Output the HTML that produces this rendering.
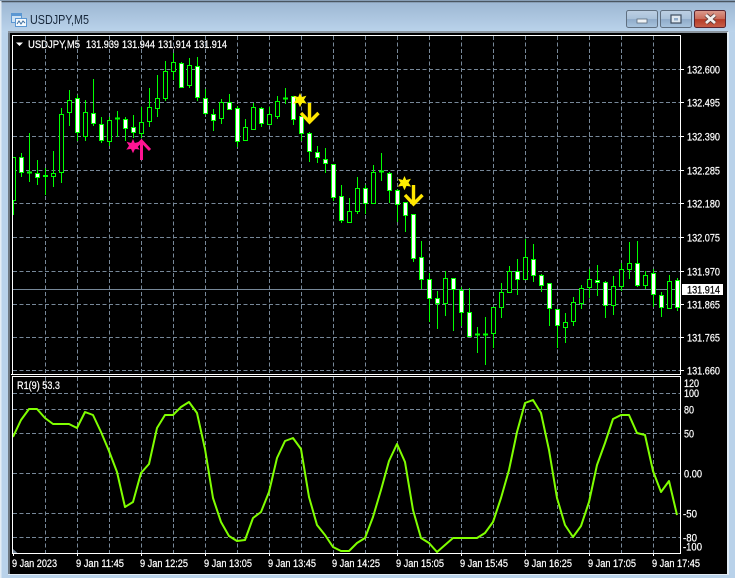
<!DOCTYPE html>
<html><head><meta charset="utf-8"><title>USDJPY,M5</title>
<style>
html,body{margin:0;padding:0;background:#b9d2ea;width:735px;height:578px;overflow:hidden}
svg{display:block}
text{font-family:"Liberation Sans",sans-serif;font-size:11px;fill:#fff;stroke:#fff;stroke-width:.22px}
</style></head><body>
<svg width="735" height="578" viewBox="0 0 735 578" xmlns="http://www.w3.org/2000/svg">
<defs>
<linearGradient id="tb" x1="0" y1="0" x2="0" y2="1"><stop offset="0" stop-color="#9bb5d1"/><stop offset="1" stop-color="#bad3eb"/></linearGradient>
<linearGradient id="btn" x1="0" y1="0" x2="0" y2="1"><stop offset="0" stop-color="#bdd0e3"/><stop offset=".5" stop-color="#a9c1da"/><stop offset=".52" stop-color="#8fabc9"/><stop offset="1" stop-color="#a9c4de"/></linearGradient>
<linearGradient id="cls" x1="0" y1="0" x2="0" y2="1"><stop offset="0" stop-color="#dc9c8e"/><stop offset=".5" stop-color="#c96a58"/><stop offset=".52" stop-color="#b53b27"/><stop offset="1" stop-color="#c8604a"/></linearGradient>
<clipPath id="mc"><rect x="13" y="36" width="667" height="338"/></clipPath>
<clipPath id="ic"><rect x="13" y="377" width="667" height="176"/></clipPath>
</defs>
<rect width="735" height="578" fill="#b9d2ea"/>
<rect x="0" y="0" width="735" height="32" fill="url(#tb)"/>
<rect x="0" y="32" width="9" height="546" fill="#b9d2ea"/>
<path d="M0 1.500H735" stroke="#4a5560" stroke-width="1.500"/>
<path d="M0.500 1V578" stroke="#e4edf5" stroke-width="2"/>
<rect x="8" y="31" width="720" height="2" fill="#8a949e"/>
<rect x="8" y="33" width="720" height="541" fill="#000"/>
<rect x="8" y="33" width="2" height="541" fill="#6d7882"/>
<rect x="727" y="32" width="2" height="543" fill="#e3edf6"/>
<rect x="8" y="574" width="721" height="1" fill="#e3edf6"/>

<!-- title icon -->
<rect x="11.500" y="13.500" width="10" height="9" fill="#cfe3f5" stroke="#5b97d2"/>
<rect x="11.500" y="13.500" width="10" height="2.500" fill="#5b97d2"/>
<rect x="15.500" y="18.500" width="11" height="8" fill="#f4f9fd" stroke="#5b97d2"/>
<path d="M17 24l2-3 2 3 2-3 2 2" fill="none" stroke="#3f6f9f"/>
<text x="30" y="24" textLength="59" lengthAdjust="spacingAndGlyphs" style="font-size:12.500px;fill:#16263a;stroke:none">USDJPY,M5</text>

<!-- window buttons -->
<rect x="626.500" y="10.500" width="31" height="17" rx="2" fill="url(#btn)" stroke="#5f6f80"/>
<rect x="637" y="19" width="10" height="4" fill="#eef2f5" stroke="#5a6a7c" stroke-width=".8"/>
<rect x="660.500" y="10.500" width="31" height="17" rx="2" fill="url(#btn)" stroke="#5f6f80"/>
<rect x="671" y="15" width="10" height="8" fill="#dfe8f0" stroke="#3e4e60" stroke-width="1.200"/>
<rect x="674" y="18" width="4" height="2.500" fill="#8fabc9"/>
<rect x="694.500" y="10.500" width="31" height="17" rx="2" fill="url(#cls)" stroke="#5a2530"/>
<path d="M706 15l9 8M715 15l-9 8" stroke="#5a3a38" stroke-width="4.400"/>
<path d="M706 15l9 8M715 15l-9 8" stroke="#f3f0ee" stroke-width="2.800"/>

<!-- grids -->
<g shape-rendering="crispEdges">
<path d="M45.500 36V374M77.500 36V374M109.500 36V374M141.500 36V374M173.500 36V374M205.500 36V374M237.500 36V374M269.500 36V374M301.500 36V374M333.500 36V374M365.500 36V374M397.500 36V374M429.500 36V374M461.500 36V374M493.500 36V374M525.500 36V374M557.500 36V374M589.500 36V374M621.500 36V374M653.500 36V374M13 69.500H680M13 102.500H680M13 136.500H680M13 170.500H680M13 203.500H680M13 237.500H680M13 271.500H680M13 304.500H680M13 337.500H680M13 370.500H680" stroke="#778899" stroke-dasharray="4 2.400" fill="none"/>
<path d="M13 289.500H680" stroke="#778899"/>
<path d="M45.500 377V553M77.500 377V553M109.500 377V553M141.500 377V553M173.500 377V553M205.500 377V553M237.500 377V553M269.500 377V553M301.500 377V553M333.500 377V553M365.500 377V553M397.500 377V553M429.500 377V553M461.500 377V553M493.500 377V553M525.500 377V553M557.500 377V553M589.500 377V553M621.500 377V553M653.500 377V553M13 393.500H680M13 409.500H680M13 433.500H680M13 473.500H680M13 513.500H680M13 537.500H680" stroke="#778899" stroke-dasharray="4 2.400" fill="none"/>
</g>

<g clip-path="url(#mc)">
<g shape-rendering="crispEdges">
<!-- wicks -->
<path fill="none" stroke="#00ff00" d="M13.500 157V215M21.500 153V177M29.500 133V182M37.500 160V185M45.500 168V195M53.500 151V187M61.500 108V183M69.500 90V126M77.500 95V141M85.500 100V141M93.500 79V126M101.500 117V143M109.500 117V146M117.500 111V137M125.500 117V141M133.500 115V138M141.500 107V138M149.500 88V127M157.500 75V117M165.500 61V101M173.500 53V80M181.500 62V88M189.500 58V88M197.500 57V101M205.500 89V115M213.500 109V131M221.500 99V124M229.500 94V110M237.500 106V147M245.500 119V140M253.500 103V130M261.500 107V127M269.500 107V124M277.500 96V119M285.500 88V104M293.500 96V125M301.500 116V141M309.500 132V162M317.500 146V163M325.500 148V173M333.500 164V201M341.500 185V223M349.500 198V222M357.500 177V214M365.500 185V214M373.500 165V203M381.500 153V181M389.500 172V203M397.500 189V222M405.500 202V232M413.500 214V262M421.500 241V289M429.500 273V322M437.500 291V329M445.500 271V316M453.500 278V331M461.500 287V326M469.500 288V336M477.500 327V353M485.500 317V365M493.500 307V348M501.500 283V318M509.500 266V292M517.500 259V295M525.500 239V279M533.500 244V282M541.500 274V292M549.500 283V326M557.500 309V348M565.500 313V343M573.500 297V326M581.500 285V309M589.500 269V298M597.500 265V296M605.500 281V318M613.500 276V315M621.500 263V291M629.500 242V279M637.500 241V287M645.500 271V289M653.500 269V307M661.500 292V317M669.500 275V308M677.500 278V311"/>
<!-- doji -->
<path fill="none" stroke="#00ff00" stroke-width="2" d="M27 172.500h5M115 118.500h5M283 98.500h5M379 171.500h5M475 334.500h5M483 334.500h5"/>
<!-- hollow bodies -->
<path fill="#000" stroke="#00ff00" d="M11.500 157.500h4V200.500h-4zM43.500 175.500h4V176.500h-4zM51.500 173.500h4V176.500h-4zM59.500 114.500h4V172.500h-4zM67.500 100.500h4V112.500h-4zM83.500 112.500h4V136.500h-4zM107.500 120.500h4V141.500h-4zM139.500 122.500h4V133.500h-4zM147.500 107.500h4V121.500h-4zM155.500 98.500h4V108.500h-4zM163.500 71.500h4V98.500h-4zM171.500 62.500h4V71.500h-4zM187.500 65.500h4V85.500h-4zM219.500 102.500h4V118.500h-4zM243.500 127.500h4V140.500h-4zM251.500 107.500h4V129.500h-4zM267.500 114.500h4V124.500h-4zM275.500 101.500h4V116.500h-4zM347.500 211.500h4V222.500h-4zM355.500 188.500h4V211.500h-4zM371.500 172.500h4V203.500h-4zM443.500 278.500h4V303.500h-4zM491.500 307.500h4V333.500h-4zM499.500 292.500h4V307.500h-4zM507.500 271.500h4V292.500h-4zM523.500 257.500h4V279.500h-4zM563.500 322.500h4V327.500h-4zM571.500 302.500h4V321.500h-4zM579.500 288.500h4V303.500h-4zM587.500 279.500h4V287.500h-4zM611.500 286.500h4V305.500h-4zM619.500 269.500h4V286.500h-4zM627.500 263.500h4V269.500h-4zM643.500 275.500h4V285.500h-4zM667.500 281.500h4V308.500h-4z"/>
<!-- white bodies -->
<path fill="#fff" stroke="#00ff00" d="M19.500 157.500h4V172.500h-4zM35.500 173.500h4V177.500h-4zM75.500 98.500h4V132.500h-4zM91.500 113.500h4V123.500h-4zM99.500 124.500h4V140.500h-4zM123.500 119.500h4V128.500h-4zM131.500 127.500h4V132.500h-4zM179.500 63.500h4V87.500h-4zM195.500 66.500h4V97.500h-4zM203.500 98.500h4V113.500h-4zM211.500 114.500h4V120.500h-4zM227.500 102.500h4V109.500h-4zM235.500 108.500h4V141.500h-4zM259.500 108.500h4V123.500h-4zM291.500 96.500h4V119.500h-4zM299.500 116.500h4V133.500h-4zM307.500 133.500h4V151.500h-4zM315.500 152.500h4V157.500h-4zM323.500 159.500h4V163.500h-4zM331.500 164.500h4V197.500h-4zM339.500 196.500h4V220.500h-4zM363.500 188.500h4V203.500h-4zM387.500 173.500h4V190.500h-4zM395.500 190.500h4V204.500h-4zM403.500 202.500h4V215.500h-4zM411.500 214.500h4V258.500h-4zM419.500 257.500h4V279.500h-4zM427.500 279.500h4V298.500h-4zM435.500 298.500h4V303.500h-4zM451.500 278.500h4V289.500h-4zM459.500 290.500h4V312.500h-4zM467.500 312.500h4V336.500h-4zM515.500 271.500h4V279.500h-4zM531.500 259.500h4V275.500h-4zM539.500 275.500h4V285.500h-4zM547.500 283.500h4V308.500h-4zM555.500 309.500h4V325.500h-4zM595.500 280.500h4V282.500h-4zM603.500 282.500h4V305.500h-4zM635.500 263.500h4V285.500h-4zM651.500 273.500h4V294.500h-4zM659.500 295.500h4V307.500h-4zM675.500 280.500h4V307.500h-4z"/>
</g>
<!-- pink star + arrow -->
<path fill="#ff1493" d="M133 139l1.800 4 4.600-1.200-2.400 4 2.700 3.800-4.700-.7-2 4.400-2-4.400-4.700.7 2.700-3.800-2.400-4 4.600 1.200z"/>
<path fill="none" stroke="#ff1493" stroke-width="3" d="M141.500 160V142M134 148.500l7.500-7.500 8.500 9"/>
<!-- yellow stars + arrows -->
<path fill="#ffee00" d="M300 93l1.800 4 4.600-1.200-2.400 4 2.700 3.800-4.700-.7-2 4.400-2-4.400-4.700.7 2.700-3.800-2.400-4 4.600 1.200z"/>
<path fill="none" stroke="#ffe600" stroke-width="3.400" d="M309.500 103V121M301 113l8.500 9 9-9"/>
<path fill="#ffee00" d="M404.500 176l1.800 4 4.600-1.200-2.400 4 2.700 3.800-4.700-.7-2 4.400-2-4.400-4.700.7 2.700-3.800-2.400-4 4.600 1.200z"/>
<path fill="none" stroke="#ffe600" stroke-width="3.400" d="M413.500 185V203M405 195l8.500 9 9-9"/>
</g>

<!-- indicator line -->
<g clip-path="url(#ic)">
<polyline fill="none" stroke="#80ff00" stroke-width="2" stroke-linejoin="round" points="13,437 21,420 29,409 37,409 45,418 53,424 61,424 69,424 77,428 85,412 93,415 101,432 109,451 117,472 125,507 133,502 141,473 149,464 157,428 165,415 173,415 181,407 189,402 197,413 205,449 213,498 221,522 229,536 237,541 245,540 253,518 261,512 269,492 277,458 285,441 293,438 301,449 309,497 317,525 325,535 333,547 341,551 349,551 357,543 365,538 373,517 381,490 389,461 397,444 405,462 413,510 421,538 429,543 437,552 445,545 453,538 461,538 469,538 477,538 485,533 493,522 501,498 509,470 517,432 525,403 533,400 541,413 549,450 557,498 565,525 573,537 581,526 589,502 597,465 605,443 613,419 621,415 629,415 637,433 645,435 653,471 661,492 669,481 677,515"/>
</g>
<path d="M13 549l5 4.500h-5z" fill="#778899"/>

<!-- borders -->
<g shape-rendering="crispEdges">
<path fill="none" stroke="#fff" d="M12.500 374.500V35.500H680.500V374.500M11 374.500H681M12.500 553.500V376.500H680.500V553.500M12 553.500H681"/>
<path stroke="#fff" d="M681 69.500h3M681 102.500h3M681 136.500h3M681 170.500h3M681 203.500h3M681 237.500h3M681 271.500h3M681 304.500h3M681 337.500h3M681 370.500h3M13.500 553v3M77.500 553v3M141.500 553v3M205.500 553v3M269.500 553v3M333.500 553v3M397.500 553v3M461.500 553v3M525.500 553v3M589.500 553v3M653.500 553v3"/>
</g>

<!-- header -->
<path d="M16 42.500h7l-3.500 3.500z" fill="#fff"/>
<text x="28" y="48" textLength="52" lengthAdjust="spacingAndGlyphs">USDJPY,M5</text>
<text x="86" y="48" textLength="33" lengthAdjust="spacingAndGlyphs">131.939</text>
<text x="122" y="48" textLength="33" lengthAdjust="spacingAndGlyphs">131.944</text>
<text x="158" y="48" textLength="33" lengthAdjust="spacingAndGlyphs">131.914</text>
<text x="194" y="48" textLength="33" lengthAdjust="spacingAndGlyphs">131.914</text>
<text x="17" y="389" textLength="43" lengthAdjust="spacingAndGlyphs">R1(9) 53.3</text>

<!-- price axis -->
<g>
<text x="687" y="73.500" textLength="33" lengthAdjust="spacingAndGlyphs">132.600</text>
<text x="687" y="106.500" textLength="33" lengthAdjust="spacingAndGlyphs">132.495</text>
<text x="687" y="140.500" textLength="33" lengthAdjust="spacingAndGlyphs">132.390</text>
<text x="687" y="174.500" textLength="33" lengthAdjust="spacingAndGlyphs">132.285</text>
<text x="687" y="207.500" textLength="33" lengthAdjust="spacingAndGlyphs">132.180</text>
<text x="687" y="241.500" textLength="33" lengthAdjust="spacingAndGlyphs">132.075</text>
<text x="687" y="275.500" textLength="33" lengthAdjust="spacingAndGlyphs">131.970</text>
<text x="687" y="308.500" textLength="33" lengthAdjust="spacingAndGlyphs">131.865</text>
<text x="687" y="341.500" textLength="33" lengthAdjust="spacingAndGlyphs">131.765</text>
<text x="687" y="374.500" textLength="33" lengthAdjust="spacingAndGlyphs">131.660</text>
</g>
<rect x="682" y="284" width="41" height="11" fill="#fff"/>
<text x="687" y="293.500" textLength="33" lengthAdjust="spacingAndGlyphs" style="fill:#000;stroke:#000">131.914</text>
<text x="684" y="387" textLength="15" lengthAdjust="spacingAndGlyphs">120</text>
<text x="684" y="397" textLength="15" lengthAdjust="spacingAndGlyphs">100</text>
<text x="684" y="413.500" textLength="10" lengthAdjust="spacingAndGlyphs">80</text>
<text x="684" y="437.500" textLength="10" lengthAdjust="spacingAndGlyphs">50</text>
<text x="684" y="477.500" textLength="18" lengthAdjust="spacingAndGlyphs">0.00</text>
<text x="683" y="517.500" textLength="14" lengthAdjust="spacingAndGlyphs">-50</text>
<text x="683" y="541.500" textLength="14" lengthAdjust="spacingAndGlyphs">-80</text>
<text x="683" y="550.500" textLength="19" lengthAdjust="spacingAndGlyphs">-100</text>

<!-- time axis -->
<text x="12" y="567" textLength="45" lengthAdjust="spacingAndGlyphs">9 Jan 2023</text>
<text x="76" y="567" textLength="48" lengthAdjust="spacingAndGlyphs">9 Jan 11:45</text>
<text x="140" y="567" textLength="48" lengthAdjust="spacingAndGlyphs">9 Jan 12:25</text>
<text x="204" y="567" textLength="48" lengthAdjust="spacingAndGlyphs">9 Jan 13:05</text>
<text x="268" y="567" textLength="48" lengthAdjust="spacingAndGlyphs">9 Jan 13:45</text>
<text x="332" y="567" textLength="48" lengthAdjust="spacingAndGlyphs">9 Jan 14:25</text>
<text x="396" y="567" textLength="48" lengthAdjust="spacingAndGlyphs">9 Jan 15:05</text>
<text x="460" y="567" textLength="48" lengthAdjust="spacingAndGlyphs">9 Jan 15:45</text>
<text x="524" y="567" textLength="48" lengthAdjust="spacingAndGlyphs">9 Jan 16:25</text>
<text x="588" y="567" textLength="48" lengthAdjust="spacingAndGlyphs">9 Jan 17:05</text>
<text x="652" y="567" textLength="48" lengthAdjust="spacingAndGlyphs">9 Jan 17:45</text>
</svg>
</body></html>
